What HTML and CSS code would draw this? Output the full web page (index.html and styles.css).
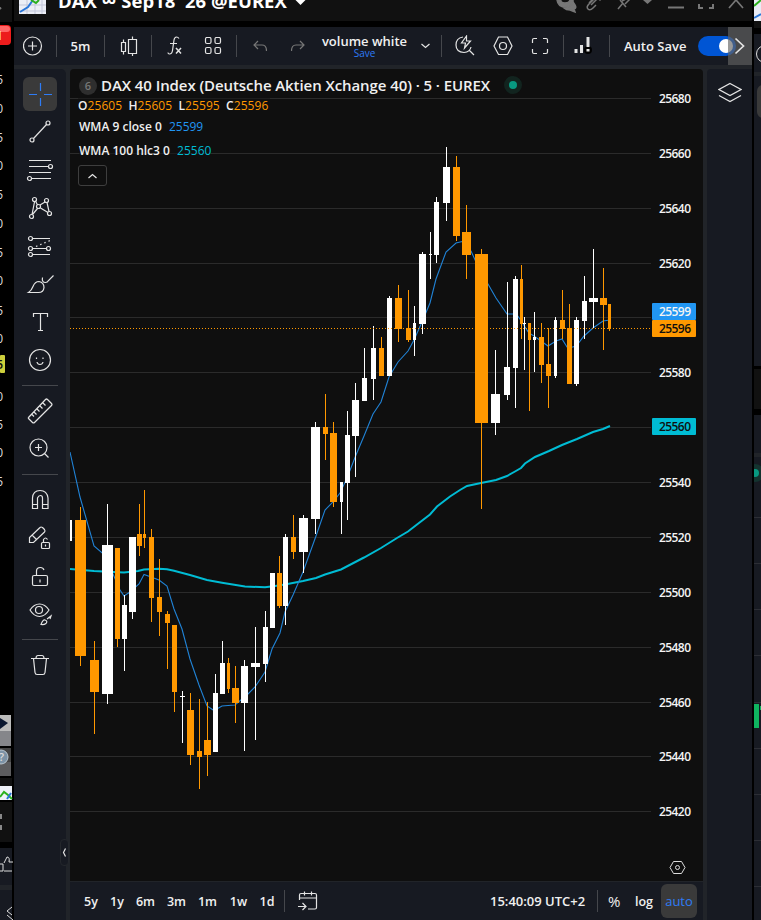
FILE: index.html
```html
<!DOCTYPE html>
<html lang="en">
<head>
  <meta charset="utf-8">
  <title>DAX Chart</title>
  <link rel="stylesheet" href="styles.css">
</head>
<body>

  <!-- edge of the window on the left -->
  <svg class="edge" width="14" height="920">
    <rect width="12" height="22" fill="#111"/>
    <path d="M-3 5l4 4" stroke="#777" stroke-width="2"/>
    <rect x="-8" y="25" width="19" height="20" rx="4" fill="#ed1c1c"/>
    <rect x="-8" y="26" width="18" height="6" rx="3" fill="#f66"/>
    <text x="3" y="40" class="badgeText">1</text>
    <g class="edgeNums" id="edgeNums"></g>
    <rect x="0" y="355" width="5" height="18" rx="1" fill="#cdcf3c"/>
    <text x="3" y="369" class="yellowNum">5</text>
    <rect y="715" width="11" height="16" fill="#bbb"/>
    <rect y="731" width="11" height="15" fill="#85868a"/>
    <path d="M0 718l8 5-8 6z" fill="#0b1730"/>
    <rect y="748" width="11" height="28" fill="#444"/>
    <rect y="762" width="11" height="14" fill="#5d5d5f"/>
    <circle cx="1" cy="757" r="7" fill="#7d93a6" stroke="#b9c6d0"/>
    <text x="-1" y="761" class="helpText">?</text>
    <rect y="778" width="12" height="8" fill="#111"/>
    <rect y="786" width="12" height="14" fill="#eef1f8"/>
    <path d="M0 797l4-5 4 3 4 4" stroke="#2bb11e" stroke-width="2" fill="none"/>
    <path d="M7 799l4-6" stroke="#2a76d8" stroke-width="2"/>
    <rect y="802" width="12" height="40" fill="#111"/>
    <path d="M-1 815h2v4M-1 829h2v-4" stroke="#888" stroke-width="2" fill="none"/>
    <rect y="848" width="12" height="37" fill="#171a22"/>
    <path d="M0 864h3v7H0M4 863l3-6q3 0 2 5h4M4 871h8" stroke="#ddd" fill="none"/>
    <rect y="885" width="12" height="5" fill="#212429"/>
    <rect y="890" width="12" height="30" fill="#171a22"/>
    <path d="M12 907l-5 4 5 4M7 915l6 5" stroke="#ddd" fill="none"/>
  </svg>

  <div class="window">
    <div class="titleBar">
      <svg class="logo" width="27" height="14">
        <rect width="27" height="14" fill="#eceef6"/>
        <path d="M0 5h27M0 11h27M8 0v14M16 0v14M23 0v14" stroke="#c3c7da"/>
        <path d="M1 12l8-5 5-7" stroke="#2a76d8" stroke-width="2" fill="none"/>
        <path d="M12 0l5 3 3-3" stroke="#2bb11e" stroke-width="2" fill="none"/>
      </svg>
      <span class="winTitle">DAX <span class="inf">∞</span> Sep18 '26 @EUREX</span>
      <svg class="winIcons" width="470" height="21">
        <path d="M13.500 0h10l-5 5z" fill="#fff"/>
        <g stroke="#777" fill="none" stroke-width="1.500">
          <path d="M275 0q1 7 8 7t8-6v-2h-3q0 4-5 4t-4-4z" fill="#777"/>
          <path d="M291 2l2 3q2 3-1 4l1 3-5-2q-4 0-6-2 8 0 9-6z" fill="#777"/>
          <path d="M312-1l-5 5q-3 3-1 5t5-1l3-3M307 3l4-4M309 5l5-5q2-2 4 0l2-2"/>
          <path d="M336 9l5-6M338 0l6 7M340 1l4-2M343 4l5-5"/>
          <path d="M361 0h9l-4.500 4z" fill="#777" stroke="none"/>
          <path d="M386 7.500h16" stroke-width="2"/>
          <path d="M417 4v4h4M427 8h4v-4" stroke-width="2"/>
          <path d="M447 8l7-8 7 8" stroke-width="1.700"/>
        </g>
      </svg>
    </div>

    <div class="toolbar">
      <div class="cell addCell"><svg width="20" height="20"><circle cx="9.500" cy="10" r="9"/><path d="M9.500 5.500v9M5 10h9"/></svg></div>
      <i class="sep"></i>
      <div class="cell interval">5m</div>
      <i class="sep"></i>
      <div class="cell w46 candleCell"><svg width="18" height="20"><path d="M1.500 6.500h4v9h-4zM3.500 3.500v3M3.500 15.500v3M8.500 3.500h8v14h-8zM12.500.5v3M12.500 17.500v3"/></svg></div>
      <i class="sep"></i>
      <div class="cell w46"><svg width="16" height="20"><path d="M12 2.500q-1-1.500-2.500-1.500Q7.500 1 7 4L5.500 14.500Q5 18 2.500 18 1 18 1 16.500M3 7.500h7"/><path d="M9 12l5 5.500M14 12l-5 5.500" stroke-width="1.500"/></svg></div>
      <div class="cell w38 gridCell"><svg class="gridIcon" width="18" height="18"><rect x="1.500" y=".5" width="5.500" height="6" rx="1.500"/><rect x="11" y=".5" width="5.500" height="6" rx="1.500"/><rect x="1.500" y="10.500" width="5.500" height="6" rx="1.500"/><rect x="11" y="10.500" width="5.500" height="6" rx="1.500"/></svg></div>
      <i class="sep"></i>
      <div class="cell w45 dim"><svg width="14" height="12"><path d="M5 1L1 5l4 4M1 5h8q4.500 0 4.500 6"/></svg></div>
      <div class="cell w31 dim"><svg width="14" height="12"><path d="M9 1l4 4-4 4M13 5H5Q.5 5 .5 11"/></svg></div>
      <div class="cell layoutName"><span class="volume">volume white</span><span class="save">Save</span></div>
      <div class="cell w18"><svg width="9" height="6"><path d="M.5 1l4 3.500L8.500 1"/></svg></div>
      <i class="sep sepLayout"></i>
      <div class="cell w46"><svg width="20" height="22"><path d="M8 2Q1 3 1 10q0 7 8 7.500Q15 17 16 12M14 15l5 5M11.500 1l-5 7h4l-1 5 6-7h-4z"/></svg></div>
      <div class="cell w29"><svg width="20" height="20"><path d="M5.500 1h9l4.500 9-4.500 8.500h-9L1 10z"/><circle cx="10" cy="10" r="3.500"/></svg></div>
      <div class="cell w46"><svg width="18" height="18"><path d="M1.500 6V3q0-1.500 1.500-1.500h3M12 1.500h3q1.500 0 1.500 1.500v3M16.500 12v3q0 1.500-1.500 1.500h-3M6 16.500H3Q1.500 16.500 1.500 15v-3"/></svg></div>
      <i class="sep"></i>
      <div class="cell w45 barsCell"><svg width="20" height="20"><path d="M3 18v-4M8.500 18v-8" stroke-width="3" /><circle cx="15" cy="15" r="4" fill="#000" stroke="none"/><path d="M15 2v10M15 14v2.500" stroke-width="3"/></svg></div>
      <i class="sep"></i>
      <div class="autoSave">Auto Save</div>
      <div class="toggle"><b></b></div>
      <div class="scrollRight"><svg width="12" height="18"><path d="M1.500 1.500l8 7.500-8 7.500" stroke-width="1.700"/></svg></div>
    </div>

    <div class="workspace">
      <div class="tools">
        <div class="tool"><span class="active"><svg viewBox="0 0 34 34"><path d="M17.500 6v8M17.500 21v8M6 17.500h8M21 17.500h8" stroke="#2e7cf6"/></svg></span></div>
        <div class="tool"><svg viewBox="0 0 34 34"><circle cx="25" cy="8" r="2"/><circle cx="9" cy="25" r="2"/><path d="M10.500 23.500l13-14"/></svg></div>
        <div class="tool"><svg viewBox="0 0 34 34"><path d="M6 7.500h22M6 13.500h19.500M6 19.500h22M8.500 25.500H28"/><circle cx="27.500" cy="13.500" r="2"/><circle cx="6.500" cy="25.500" r="2"/></svg></div>
        <div class="tool"><svg viewBox="0 0 34 34"><circle cx="11.500" cy="8.500" r="2"/><circle cx="23.500" cy="9.500" r="2"/><circle cx="15.500" cy="15.500" r="2"/><circle cx="8.500" cy="25.500" r="2"/><circle cx="26.500" cy="22.500" r="2"/><path d="M11.500 11L9 23.500M12.500 10l2 4M17 14l5-3M24 11.500l2 9M17.500 17l7.500 4.500M14.500 17.500l-5 6"/></svg></div>
        <div class="tool"><svg viewBox="0 0 34 34"><path d="M9.500 9.500H27M9.500 19.500H23.500M9.500 25.500H27"/><path d="M13 17.500l14-6" stroke-dasharray="1.500 3"/><circle cx="7.500" cy="9.500" r="2"/><circle cx="7.500" cy="19.500" r="2"/><circle cx="25.500" cy="19.500" r="2"/><circle cx="7.500" cy="25.500" r="2"/></svg></div>
        <div class="tool"><svg viewBox="0 0 34 34"><path d="M5.500 25.500h10q5 0 5.500-5 0-5-5-6-4 0-6 5-1.500 4-4.500 6zM19.500 10.500q-1 5 3 5 2 0 3-2l5-5"/></svg></div>
        <div class="tool"><svg viewBox="0 0 34 34"><path d="M10.500 12V8.500h14V12M17.500 8.500v17M15 25.500h5"/></svg></div>
        <div class="tool"><svg viewBox="0 0 34 34"><circle cx="17" cy="17" r="10.500"/><path d="M13.500 14.500v1.500M20 14.500v1.500M14 19q.5 2.500 3 2.500t3-2.500"/></svg></div>
        <hr>
        <div class="tool"><svg viewBox="0 0 34 34"><path d="M5.500 23.500l17-18q1-1 2 0l4 4q1 1 0 2l-17 17q-1 1-2 0l-4-4q-.5-.5 0-1zM20 9l2.500 2.500M17 12l2.500 2.500M14 15l2.500 2.500M11 18l2.500 2.500M9 20.500l2 2"/></svg></div>
        <div class="tool"><svg viewBox="0 0 34 34"><circle cx="15.500" cy="15.500" r="8.500"/><path d="M21.500 21.500l4 4M15.500 12v7M12 15.500h7"/></svg></div>
        <hr>
        <div class="tool"><svg viewBox="0 0 34 34"><path d="M9.500 25.500V15Q10 7.500 17 7.500T25 15v10.500h-5.500V15q0-2.500-2-2.500t-3 2.500v10.500zM9.500 21.500h5M19.500 21.500H25"/></svg></div>
        <div class="tool"><svg viewBox="0 0 34 34"><path d="M6.500 21.500v-5L17 6.500q1-1 2.500 0l2 2q1 1.500 0 2.500l-11 10.500zM9 14l5 5"/><rect x="18.500" y="21.500" width="8" height="6" rx="1"/><path d="M20.500 21.500v-3q2-3 4 0M22.500 23.500v2"/></svg></div>
        <div class="tool"><svg viewBox="0 0 34 34"><rect x="9.500" y="16.500" width="15" height="10" rx="1.500"/><path d="M13.500 16.500V12q0-3.500 4-3.500Q20 8.500 21 11M17 20.500v3"/></svg></div>
        <div class="tool"><svg viewBox="0 0 34 34"><path d="M7 13q4-6 9.500-6T26 13q-4 6.500-9.500 6.500T7 13z"/><circle cx="16" cy="13" r="3.500"/><path d="M18 27.500q2-5 4-4.500 3 1 1 3.500-2 1.500-5 1zM24 22l4-3-1 3"/></svg></div>
        <hr>
        <div class="tool"><svg viewBox="0 0 34 34"><path d="M8 10.500h18M13 10.500q0-3 2-3h4q2 0 2 3M10.500 10.500l1.500 14q.3 2 2 2h6q1.700 0 2-2l1.500-14"/></svg></div>
        <div class="handle"><svg width="5" height="9"><path d="M3.500.5l-2 4 2 4"/></svg></div>
      </div>

      <div class="chartCol">
        <div class="chart">
          <svg id="chart" viewBox="70 69 633 812" width="633" height="812">
            <g id="grid"></g>
            <polyline class="wma100" points="70,569 94,571 113,572 124,572.5 138,571 144,569.500 159,568.700 167,569.300 174,570.700 190,575 207,580 222,582.700 245,586.500 265,587.300 275,586 285,584.500 303,581 316,578 325,574.500 341,569.500 364,557.500 381,548 397,538 408,531.500 417,524.500 430,514.500 437,506.500 450,496.500 460,490 467,486 481,483 496,480 507,476 515,471.500 521,468 525,463.500 535,457 549,451 562,445 577,439 593,432 603,429 610,426"/>
            <polyline class="wma9" points="70,452 80,497 94,546 107,557 113,574 120,590 124,596 130,592 139,584 144,574.500 151,577 159,580 167,586 174,609 182,629 190,659 199,685 207,706 214,710.500 222,706 228,705.500 235,705 248,694 255,687 265,672 272,649 280,633 285,612 293,595 303,572 316,536 325,510 333,502 340,493 347,478 356,455 364,436 373,414 381,402 389,377 398,362 408,351 414,340 422,322 430,303 436,279 446,252 456,243 462,241.500 471,251 481,273 488,284 496,298 507,314 513,314 517,315 522,322 525,327 529,333 534,336 541,341 548,346 556,341 562,339 567,347 573,347 577,345 584,336 593,328 603,321 610,320"/>
            <g id="candles" shape-rendering="crispEdges"></g>
            <path d="M70 328.500H651" class="priceLine"/>
            <g id="axis"></g>
            <rect x="652" y="303" width="44" height="17" rx="1" fill="#2196f3"/>
            <rect x="652" y="320" width="44" height="17" rx="1" fill="#ff9800"/>
            <rect x="652" y="418" width="44" height="17" rx="1" fill="#00bcd4"/>
            <text class="price" x="659" y="316" textLength="32">25599</text>
            <text class="price dark" x="659" y="333" textLength="32">25596</text>
            <text class="price dark" x="659" y="431" textLength="32">25560</text>
            <path class="nut" d="M673.500 861.500h8l3.500 6-3.500 6h-8l-3.500-6z"/>
            <circle class="nut" cx="677.500" cy="867.500" r="2"/>
          </svg>
          <div class="legend">
            <div class="symbol"><span class="six">6</span><span class="name">DAX 40 Index (Deutsche Aktien Xchange 40) · 5 · EUREX</span><span class="status"></span></div>
            <div class="ohlc">O<em>25605</em> H<em>25605</em> L<em>25595</em> C<em>25596</em></div>
            <div class="study">WMA 9 close 0 <em class="blue">25599</em></div>
            <div class="study second">WMA 100 hlc3 0 <em class="cyan">25560</em></div>
            <div class="collapse"><svg width="9" height="6"><path d="M.5 5l4-3.500 4 3.500"/></svg></div>
          </div>
        </div>

        <div class="bottomBar">
          <span class="range">5y</span>
          <span class="range">1y</span>
          <span class="range wide">6m</span>
          <span class="range wide">3m</span>
          <span class="range wide">1m</span>
          <span class="range wide">1w</span>
          <span class="range">1d</span>
          <i class="sep"></i>
          <svg class="calendar" width="20" height="20"><path d="M1.500 9V4q0-1.500 1.500-1.500h14q1.500 0 1.500 1.500v12.500q0 1.500-1.500 1.500h-7M1.500 7h17M6.500.5v4M13.500.5v4M0 15.500h7.500M4.500 12l3.500 3.500L4.500 19"/></svg>
          <span class="clock">15:40:09 UTC+2</span>
          <i class="sep"></i>
          <span class="pct">%</span>
          <span class="log">log</span>
          <span class="auto">auto</span>
        </div>
      </div>

      <div class="rightPanel">
        <svg width="24" height="22"><path d="M12 1.500l11 6-11 6-11-6zM1 13.500l11 6 11-6"/></svg>
      </div>
    </div>
  </div>

  <!-- edge of the window on the right -->
  <svg class="edge" width="9" height="920">
    <rect x="2" width="7" height="366" fill="#171a22"/>
    <rect x="2" width="7" height="21" fill="#e8ebf5"/>
    <path d="M2 6l7-6" stroke="#2bb11e" stroke-width="2"/>
    <path d="M2 18l7-4" stroke="#2a76d8" stroke-width="2"/>
    <rect x="2" y="21" width="7" height="7" fill="#111"/>
    <rect x="2" y="28" width="7" height="6" fill="#000"/>
    <circle cx="13" cy="54" r="8.500" stroke="#ddd" fill="none"/>
    <rect x="2" y="72" width="7" height="4" fill="#212429"/>
    <rect x="5" y="85" width="20" height="33" rx="6" fill="#3a3a3a"/>
    <rect x="2" y="367" width="7" height="42" fill="#111"/>
    <rect x="2" y="367" width="7" height="2" fill="#000"/>
    <rect x="2" y="415" width="7" height="505" fill="#171a22"/>
    <rect x="2" y="453" width="7" height="4" fill="#212429"/>
    <circle cx="3" cy="473" r="9" fill="#14332f"/>
    <circle cx="3" cy="473" r="4" fill="#089981"/>
    <path d="M2 517.500h7M2 563.500h7M2 609.500h7M2 655.500h7M2 702.500h7M2 748.500h7M2 794.500h7M2 840.500h7M2 886.500h7" stroke="#2c2e35"/>
    <rect x="2" y="704" width="5" height="24" fill="#0fb460"/>
    <rect x="8" y="706" width="1" height="4" fill="#0fb460"/>
    <rect width="2" height="920" fill="#000"/>
  </svg>

  <script src="chart.js"></script>
</body>
</html>
```
FILE: styles.css
```css
body {
  margin: 0;
  width: 761px;
  height: 920px;
  display: flex;
  overflow: hidden;
  background-color: #000;
  color: #f0f0f0;
  font-family: "Open Sans", "Noto Sans", sans-serif;
  font-weight: 600;
}

svg {
  display: block;
  flex: none;
}

.edge {
  background-color: #000;
}

.edgeNums text, .badgeText, .helpText, .yellowNum {
  fill: #ddd;
  font-size: 12px;
  text-anchor: end;
}

.edgeNums text {
  font-weight: 400;
}

.badgeText {
  font-size: 13px;
  fill: #fff;
}

.helpText {
  text-anchor: start;
  font-size: 11px;
}

.yellowNum {
  fill: #111;
}

.window {
  width: 738px;
  display: flex;
  flex-direction: column;
}

.titleBar {
  height: 21px;
  display: flex;
  overflow: hidden;
  background-color: #111;
  margin-bottom: 6px;
}

.logo {
  margin-left: 5px;
}

.winTitle {
  width: 235px;
  margin-left: 12px;
  margin-top: -13px;
  font-size: 18.5px;
  line-height: 28px;
  font-weight: 700;
  white-space: pre;
  color: #fff;
}

.inf {
  font-size: 21px;
  line-height: 20px;
}

.winIcons {
  margin-left: -11px;
}

.toolbar {
  height: 38px;
  display: flex;
  align-items: center;
  background-color: #171a22;
  border-bottom: 4px solid #212429;
}

.cell {
  display: flex;
  flex: none;
  justify-content: center;
  align-items: center;
}

.toolbar svg, .tools svg, .rightPanel svg, .calendar, .collapse svg {
  fill: none;
  stroke: #e4e4e4;
  stroke-width: 1.2;
}

.toolbar .gridIcon {
  margin-top: -1px;
}

.addCell {
  width: 38px;
  padding-right: 4px;
}

.interval {
  width: 47px;
  font-size: 13px;
}

.w18 { width: 18px; }
.w29 { width: 29px; }
.w31 { width: 31px; }
.w38 { width: 38px; }
.w45 { width: 45px; }
.w46 { width: 46px; }

.toolbar .dim svg {
  stroke: #777;
}

.candleCell svg {
  margin-left: 2px;
}

.gridCell svg {
  margin-right: 8px;
}

.barsCell svg {
  margin-right: 8px;
  margin-top: -3px;
}

.sep {
  width: 1px;
  height: 22px;
  flex: none;
  background-color: #45474c;
}

.sepLayout {
  margin-left: 7px;
}

.layoutName {
  width: 103px;
  flex-direction: column;
  white-space: nowrap;
}

.volume {
  font-size: 13px;
  line-height: 14px;
}

.save {
  font-size: 10px;
  line-height: 11px;
  font-weight: 400;
  color: #2e7cf6;
}

.autoSave {
  width: 74px;
  margin-left: 14px;
  font-size: 13px;
  white-space: nowrap;
}

.toggle {
  width: 38px;
  height: 20px;
  flex: none;
  border-radius: 10px;
  background-color: #0055d4;
}

.toggle b {
  display: block;
  width: 14px;
  height: 14px;
  margin: 3px 0 0 21px;
  border-radius: 50%;
  background-color: #fff;
}

.scrollRight {
  width: 24px;
  height: 38px;
  flex: none;
  margin-left: -8px;
  display: flex;
  align-items: center;
  justify-content: center;
  background-color: rgba(100, 100, 100, 0.65);
}

.workspace {
  height: 851px;
  display: flex;
  background-color: #212429;
}

.tools {
  width: 52px;
  height: 845px;
  padding-top: 6px;
  margin-right: 4px;
  flex: none;
  position: relative;
  background-color: #171a22;
  border-radius: 0 5px 0 0;
}

.tool {
  height: 38px;
  display: flex;
  align-items: center;
  justify-content: center;
}

.tool svg {
  width: 34px;
  height: 34px;
}

.active {
  border-radius: 6px;
  background-color: #3a3a3a;
}

.tools hr {
  height: 1px;
  margin: 6px 8px;
  border: 0;
  background-color: #45474c;
}

.handle {
  position: absolute;
  right: -3px;
  top: 770px;
  width: 7px;
  height: 25px;
  display: flex;
  align-items: center;
  justify-content: center;
  border: 1px solid #24272c;
  border-radius: 4px;
  background-color: #171a22;
}

.chartCol {
  width: 633px;
  flex: none;
}

.chart {
  height: 812px;
  position: relative;
  background-color: #0f0f0f;
  border-radius: 4px 4px 0 0;
}

.gridLine {
  stroke: #2b2b2b;
}

.wma9, .wma100 {
  fill: none;
  stroke: #2183d6;
  stroke-width: 1.1;
}

.wma100 {
  stroke: #00bcd4;
  stroke-width: 2;
}

.priceLine {
  stroke: #ff9800;
  stroke-dasharray: 1 2;
}

.price {
  fill: #f4f4f4;
  font-size: 12px;
}

.price.dark {
  fill: #0f0f0f;
}

.nut {
  fill: none;
  stroke: #ddd;
}

/* legend lies over the chart */
.legend {
  position: absolute;
  left: 8px;
  top: 6px;
  white-space: nowrap;
}

.legend em {
  font-style: normal;
  font-weight: 400;
}

.symbol {
  display: flex;
  align-items: center;
  height: 21px;
}

.six {
  width: 18px;
  height: 18px;
  margin-left: 1px;
  line-height: 18px;
  border-radius: 50%;
  text-align: center;
  font-size: 11px;
  color: #777;
  background-color: #2e2e2e;
}

.name {
  width: 390px;
  margin-left: 4px;
  margin-top: -2px;
  font-size: 15px;
  letter-spacing: -0.08px;
}

.status {
  width: 8px;
  height: 8px;
  margin-left: 13px;
  margin-top: -1px;
  border: 5px solid #12241f;
  border-radius: 50%;
  background-color: #089981;
}

.ohlc {
  height: 19px;
  line-height: 20px;
  width: 192px;
  font-size: 12px;
  letter-spacing: 0.08px;
  word-spacing: 3px;
  background-color: rgba(15, 15, 15, 0.5);
}

.ohlc em {
  color: #ff9800;
}

.study {
  width: max-content;
  height: 18px;
  line-height: 20px;
  margin: 2px 0 0 1px;
  font-size: 12px;
  background-color: rgba(15, 15, 15, 0.5);
}

.second {
  margin-top: 6px;
}

.blue {
  margin-left: 4px;
  color: #2196f3;
}

.cyan {
  margin-left: 4px;
  color: #00bcd4;
}

.collapse {
  width: 27px;
  height: 19px;
  margin-top: 6px;
  display: flex;
  align-items: center;
  justify-content: center;
  border: 1px solid #3e3e3e;
  border-radius: 3px;
}

.bottomBar {
  height: 38px;
  display: flex;
  align-items: center;
  padding-left: 8px;
  background-color: #171a22;
  border-top: 1px solid #212429;
  font-size: 12.5px;
}

.range {
  width: 26px;
  flex: none;
  text-align: center;
}

.wide {
  width: 31px;
}

.bottomBar .sep {
  margin-left: 4px;
}

.calendar {
  margin-left: 13px;
}

.clock {
  width: 98px;
  flex: none;
  margin-left: 172px;
  margin-right: 5px;
  font-size: 13px;
  white-space: nowrap;
}

.pct {
  width: 14px;
  margin-left: 10px;
  font-size: 15px;
  font-weight: 400;
}

.log {
  width: 19px;
  margin-left: 13px;
}

.auto {
  width: 36px;
  height: 34px;
  flex: none;
  line-height: 34px;
  margin-left: 7px;
  border-radius: 6px;
  text-align: center;
  font-size: 13px;
  font-weight: 400;
  color: #2e7cf6;
  background-color: #3a3a3a;
}

.rightPanel {
  width: 45px;
  height: 851px;
  margin-left: 4px;
  border-radius: 4px 0 0 0;
  background-color: #171a22;
}

.rightPanel svg {
  margin: 13px 0 0 11px;
}
```
FILE: chart.js
```js
var SVG = 'http://www.w3.org/2000/svg';

// x, width, open/close top, bottom, wick x, high, low, up(1)/down(0)
var candles = [
  [70,2,520,541,70,520,541,1],
  [75,11,520,656,80,507,666,0],
  [90,9,660,692,94,641,734,0],
  [102,11,545,694,107,504,704,1],
  [115,5,548,639,117,548,647,0],
  [122,5,605,639,124,595,671,1],
  [129,7,537,612,132,537,619,1],
  [137,5,534,546,139,504,556,0],
  [143,3,534,538,144,490,548,0],
  [149,5,537,598,151,529,622,0],
  [157,5,597,612,159,559,636,0],
  [165,5,614,623,167,611,669,0],
  [172,5,625,692,174,625,712,0],
  [180,5,696,697,182,691,743,1],
  [187,7,710,755,190,693,765,0],
  [197,5,751,757,199,699,789,0],
  [204,7,740,755,207,702,776,0],
  [213,5,693,752,215,674,752,1],
  [220,5,663,694,222,641,694,1],
  [227,3,663,689,228,658,693,0],
  [232,7,688,703,235,666,723,0],
  [241,7,666,703,244,660,751,1],
  [251,9,663,667,255,627,740,1],
  [263,5,627,664,265,611,682,1],
  [270,5,573,628,272,573,628,1],
  [277,5,573,606,279,556,608,0],
  [283,5,537,606,285,534,625,1],
  [291,5,537,552,293,515,559,0],
  [299,9,518,552,303,515,573,1],
  [311,9,427,519,315,422,534,1],
  [323,5,427,434,325,394,460,0],
  [330,7,433,502,333,422,507,0],
  [340,3,482,502,341,482,534,1],
  [345,5,435,483,347,411,520,1],
  [352,7,400,436,355,383,477,1],
  [362,5,378,401,364,348,401,1],
  [371,5,348,379,373,326,400,1],
  [379,5,348,376,381,337,376,0],
  [387,5,298,376,389,296,376,1],
  [395,7,298,329,398,285,342,0],
  [406,5,328,340,408,290,342,0],
  [413,3,323,340,414,306,356,1],
  [419,7,254,324,422,252,334,1],
  [429,3,254,255,430,232,279,1],
  [434,5,202,255,436,197,263,1],
  [443,7,167,203,446,147,221,1],
  [453,7,167,236,456,156,241,0],
  [462,9,232,255,466,205,279,0],
  [475,13,254,423,481,249,509,0],
  [491,9,394,423,495,350,435,1],
  [504,6,367,395,507,282,400,1],
  [513,5,279,368,515,276,408,1],
  [520,3,279,324,521,265,339,0],
  [523,3,323,324,524,317,370,1],
  [528,3,323,340,529,323,411,0],
  [533,3,337,340,534,312,372,1],
  [539,5,337,365,541,323,383,0],
  [546,5,364,376,548,328,408,0],
  [554,3,320,376,555,317,378,1],
  [560,5,320,329,562,290,339,0],
  [567,5,328,384,569,304,384,0],
  [574,5,320,384,576,317,386,1],
  [582,5,301,321,584,276,339,1],
  [589,9,298,302,593,249,328,1],
  [600,7,298,305,603,268,350,0],
  [608,3,304,329,609,304,331,0]
];

// price -> y of its grid line, null where a label covers the price
var levels = [
  [25680, 98], [25660, 153], [25640, 208], [25620, 263], [null, 317],
  [25580, 372], [null, 427], [25540, 482], [25520, 537], [25500, 592],
  [25480, 647], [25460, 702], [25440, 756], [25420, 811]
];

function add(parent, tag, attrs) {
  var el = document.createElementNS(SVG, tag);
  for (var key in attrs) {
    el.setAttribute(key, attrs[key]);
  }
  document.getElementById(parent).appendChild(el);
  return el;
}

candles.forEach(function (c) {
  var fill = c[7] ? '#ffffff' : '#ff9800';
  add('candles', 'rect', { x: c[4], y: c[5], width: 1, height: c[6] - c[5], fill: fill });
  add('candles', 'rect', { x: c[0], y: c[2], width: c[1], height: c[3] - c[2], fill: fill });
});

levels.forEach(function (l) {
  add('grid', 'path', { d: 'M70 ' + (l[1] + 0.5) + 'H651', 'class': 'gridLine' });
  if (l[0]) {
    add('axis', 'text', { x: 659, y: l[1] + 4.5, textLength: 32, 'class': 'price' }).textContent = l[0];
  }
});

// clipped price scale of the neighbour window
[79, 108, 137, 165, 194, 223, 252, 280, 310, 338, null, 396, 424, 452, 481].forEach(function (y, i) {
  if (y) {
    add('edgeNums', 'text', { x: 3, y: y + 5 }).textContent = i % 2 ? '0' : '5';
  }
});
```
